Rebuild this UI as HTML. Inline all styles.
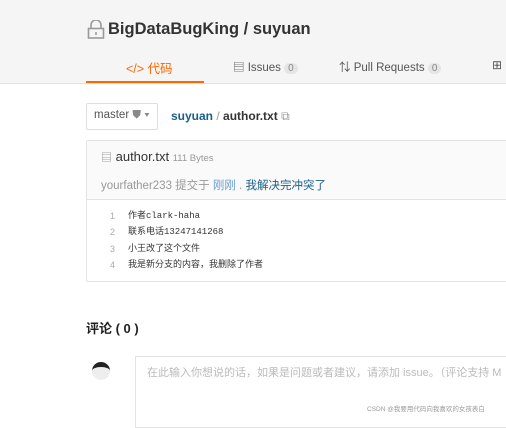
<!DOCTYPE html>
<html><head><meta charset="utf-8"><style>
body{margin:0;width:506px;height:419px;overflow:hidden;background:#fff;font-family:"Liberation Sans","Noto Sans CJK SC",sans-serif;position:relative}
.a{position:absolute;white-space:nowrap}
</style></head><body>
<div class="a" style="left:0;top:0;width:506px;height:83px;background:#f5f5f5;border-bottom:1px solid #e3e3e3"></div>
<svg class="a" style="left:87px;top:20px" width="18" height="19" viewBox="0 0 18 19"><path d="M4 8V5a5 5 0 0 1 10 0v3" fill="none" stroke="#999" stroke-width="1.6"/><rect x="1.5" y="8.5" width="15" height="9.5" fill="none" stroke="#999" stroke-width="1.6"/><path d="M9 12v3" stroke="#999" stroke-width="1.5"/></svg>
<div class="a" style="left:108px;top:20px;font-size:16.5px;font-weight:bold;color:#333">BigDataBugKing / suyuan</div>
<div class="a" style="left:126px;top:58px;font-size:12.5px;color:#f60">&lt;/&gt; 代码</div>
<div class="a" style="left:86px;top:81px;width:118px;height:2px;background:#f60"></div>
<div class="a" style="left:233px;top:59px;font-size:11.5px;color:#555">▤ Issues <span style="background:#e5e5e5;border-radius:8px;padding:0 4px;color:#888;font-size:10px">0</span></div>
<div class="a" style="left:339px;top:59px;font-size:11.5px;color:#555">⇅ Pull Requests <span style="background:#e5e5e5;border-radius:8px;padding:0 4px;color:#888;font-size:10px">0</span></div>
<div class="a" style="left:492px;top:58px;font-size:12px;color:#555">⊞</div>
<div class="a" style="left:86px;top:103px;width:70px;height:25px;border:1px solid #ddd;border-radius:2px;background:#fff"></div>
<div class="a" style="left:94px;top:109px;font-size:11.5px;color:#555">master <span style="color:#888">⛊ ▾</span></div>
<div class="a" style="left:171px;top:109px;font-size:12px;font-weight:bold;color:#1a5e8a">suyuan <span style="color:#999;font-weight:normal">/</span> <span style="color:#333">author.txt</span> <span style="color:#999;font-weight:normal">⧉</span></div>
<div class="a" style="left:86px;top:140px;width:430px;height:140px;border:1px solid #e3e3e3;border-radius:2px"></div>
<div class="a" style="left:87px;top:141px;width:430px;height:58px;background:#fafafa;border-bottom:1px solid #e3e3e3"></div>
<div class="a" style="left:101px;top:149px;font-size:13px;color:#333"><span style="color:#888;font-size:11px">▤</span> author.txt <span style="font-size:9.5px;color:#999">111 Bytes</span></div>
<div class="a" style="left:101px;top:177px;font-size:11.5px;color:#999">yourfather233 提交于 <span style="color:#6aa0d0">刚刚</span> . <span style="color:#1a5e8a">我解决完冲突了</span></div>
<div class="a" style="left:110px;top:208px;font-size:9px;line-height:16.4px;color:#aaa;text-align:right">1<br>2<br>3<br>4</div>
<div class="a" style="left:128px;top:208px;font-size:9px;line-height:16.4px;color:#333;font-family:'Liberation Mono','Noto Sans CJK SC',monospace">作者clark-haha<br>联系电话13247141268<br>小王改了这个文件<br>我是新分支的内容，我删除了作者</div>
<div class="a" style="left:86px;top:318px;font-size:13px;font-weight:bold;color:#222">评论 ( 0 )</div>
<div class="a" style="left:92px;top:362px;width:18px;height:18px;border-radius:50%;background:#eee;border-top:5px solid #222;box-sizing:border-box"></div>
<div class="a" style="left:135px;top:356px;width:380px;height:70px;border:1px solid #e3e3e3"></div>
<div class="a" style="left:147px;top:364px;font-size:11px;color:#bbb">在此输入你想说的话，如果是问题或者建议，请添加 issue。（评论支持 M</div>
<div class="a" style="left:367px;top:403px;font-size:6.5px;color:#999">CSDN @我要用代码向我喜欢的女孩表白</div>
</body></html>
